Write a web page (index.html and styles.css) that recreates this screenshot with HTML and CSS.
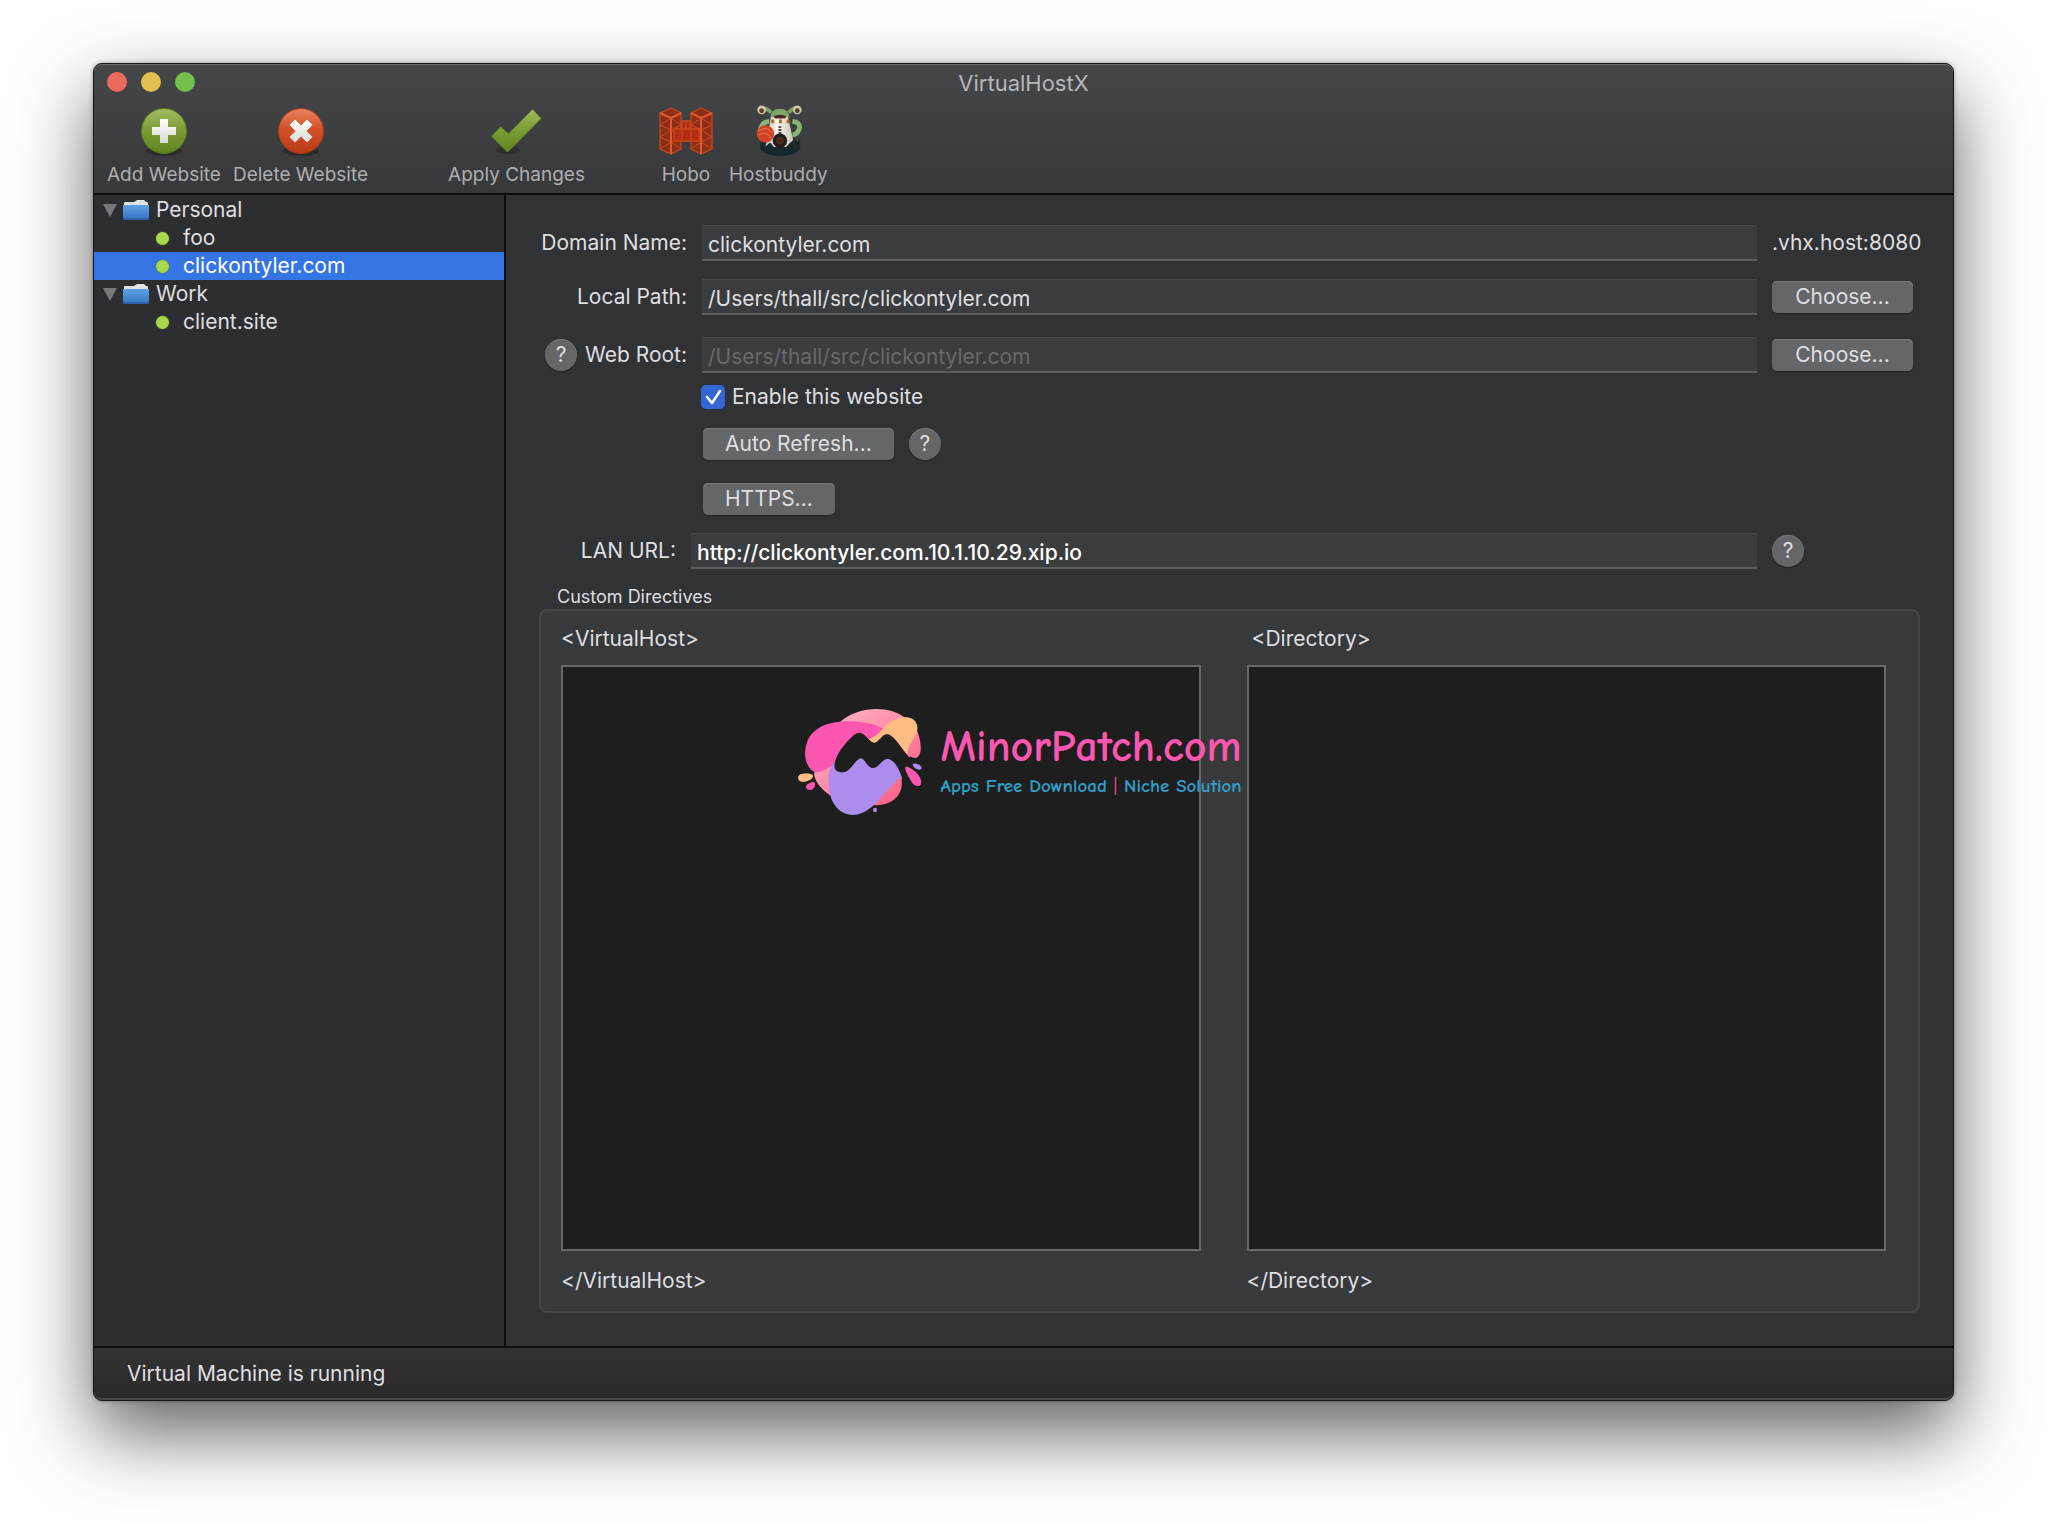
FILE: index.html
```html
<!DOCTYPE html>
<html lang="en">
<head>
<meta charset="utf-8">
<title>VirtualHostX</title>
<link rel="stylesheet" href="styles.css">
</head>
<body>
<svg class="defs" width="0" height="0" aria-hidden="true">
  <defs>
    <linearGradient id="green" x1="0" y1="0" x2="0" y2="1"><stop offset="0" stop-color="#a3bd62"/><stop offset=".45" stop-color="#7d9f35"/><stop offset="1" stop-color="#5f8320"/></linearGradient>
    <linearGradient id="red" x1="0" y1="0" x2="0" y2="1"><stop offset="0" stop-color="#e88562"/><stop offset=".45" stop-color="#d4502a"/><stop offset="1" stop-color="#b63a15"/></linearGradient>
    <linearGradient id="white" x1="0" y1="0" x2="0" y2="1"><stop offset="0" stop-color="#fff"/><stop offset="1" stop-color="#d9dbd6"/></linearGradient>
    <linearGradient id="folder" x1="0" y1="0" x2="0" y2="1"><stop offset="0" stop-color="#5ea2e2"/><stop offset="1" stop-color="#3474c2"/></linearGradient>
    <linearGradient id="robe" x1="0" y1="0" x2="1" y2="0"><stop offset="0" stop-color="#b9b5a6"/><stop offset=".4" stop-color="#fbf9ee"/><stop offset="1" stop-color="#c7c0ad"/></linearGradient>
    <linearGradient id="rose" x1="0" y1="0" x2="1" y2="1"><stop offset="0" stop-color="#ffb9c4"/><stop offset=".3" stop-color="#ff9fb4"/><stop offset="1" stop-color="#f8567f"/></linearGradient>
    <symbol id="folder-icon" viewBox="0 0 26 22">
      <path d="M1 5V4q0-1 1-1h9l3-2h7l2 2h1q1 0 1 1v3H1z" fill="#dfe3e6"/>
      <path d="M0 6h26v13q0 2-1 2H1q-1 0-1-2z" fill="url(#folder)"/>
      <path d="M0 20h26" stroke="#244f91"/>
    </symbol>
  </defs>
</svg>
<div class="window">
  <header class="chrome">
    <div class="titlebar">
      <div class="lights">
        <button class="light close" aria-label="Close"></button>
        <button class="light minimize" aria-label="Minimize"></button>
        <button class="light zoom" aria-label="Zoom"></button>
      </div>
      <h1>VirtualHostX</h1>
    </div>
    <div class="toolbar">
      <button class="tool">
        <svg width="54" height="50" viewBox="0 0 54 50"><ellipse cx="27" cy="44" rx="18" ry="5" fill="#222" opacity=".6"/><circle cx="27" cy="24" r="22.500" fill="url(#green)" stroke="#587a20"/><path d="M23 12h8v8h8v8h-8v8h-8v-8h-8v-8h8z" fill="url(#white)"/></svg>
        <span>Add Website</span>
      </button>
      <button class="tool">
        <svg width="54" height="50" viewBox="0 0 54 50"><ellipse cx="27" cy="44" rx="18" ry="5" fill="#222" opacity=".6"/><circle cx="27" cy="24" r="22.500" fill="url(#red)" stroke="#ae3a1a"/><path d="M21 12.500l6 6 6-6 5.500 5.500-6 6 6 6-5.500 5.500-6-6-6 6-5.500-5.500 6-6-6-6z" fill="url(#white)"/></svg>
        <span>Delete Website</span>
      </button>
      <button class="tool apply">
        <svg width="54" height="50" viewBox="0 0 54 50"><ellipse cx="19" cy="43" rx="12" ry="4" fill="#222" opacity=".5"/><path d="M3 29.500l8.500-9.500 8 7L43.500 2.500 52 11.500 18.500 45z" fill="url(#green)" stroke="#688c2b"/></svg>
        <span>Apply Changes</span>
      </button>
      <button class="tool hobo">
        <svg width="54" height="50" viewBox="0 0 54 50">
          <g stroke="#c9471f" stroke-width="1.300" stroke-linejoin="round">
            <path d="M20 16h15v17H20z" fill="#a8260e"/>
            <path d="M1 6l11-5 10 5v36l-10 5-11-5z" fill="#8d2f17"/>
            <path d="M32 6l10-5 11 5v36l-11 5-10-5z" fill="#8d2f17"/>
            <path d="M1 18l11 5 10-5M1 30l11 5 10-5M32 18l10 5 11-5M32 30l10 5 11-5" fill="none"/>
            <path d="M12 11L1 18M12 23L1 30M12 35L1 42M12 11l10 7M12 23l10 7M12 35l10 7M42 11l-10 7M42 23l-10 7M42 35l-10 7M42 11l11 7M42 23l11 7M42 35l11 7" fill="none" stroke-width="1"/>
            <path d="M1 6l11 5 10-5M12 11v36M32 6l10 5 11-5M42 11v36" fill="none" stroke="#e0582e" stroke-width="2"/>
            <path d="M15 22h25v12H15zM23 22v12M32 22v12M23 14h8v8h-8zM27 14v8" fill="#b32d12"/>
          </g>
        </svg>
        <span>Hobo</span>
      </button>
      <button class="tool buddy">
        <svg width="54" height="52" viewBox="0 0 54 54">
          <ellipse cx="29" cy="43" rx="21" ry="10" fill="#15282b"/>
          <path d="M20 8Q12 0 9 6M38 8Q45 0 48 6" fill="none" stroke="#79a269" stroke-width="4"/>
          <path d="M18 17Q10 17 8 28M42 17q9 1 7 8-2 6-7 6" fill="none" stroke="#89b676" stroke-width="5"/>
          <path d="M20 11q8-7 17 0l7 31-4-3-5 5-5-3-7 3-4-5-5 4z" fill="url(#robe)"/>
          <path d="M44 35l3 5 3-6v12h-9l-2-6z" fill="#1b292b"/>
          <path d="M19 13q1-9 10-9t10 9q-10-4-20 0z" fill="#7ca56a"/>
          <path d="M22 12q7-4 14 0l-2 2H24z" fill="#4b271f"/>
          <circle cx="10" cy="5" r="4.500" fill="#d4c9ab"/><circle cx="10" cy="6" r="2.500" fill="#6b3429"/>
          <circle cx="47" cy="5" r="4.500" fill="#d4c9ab"/><circle cx="47" cy="6" r="2.500" fill="#563b35"/>
          <circle cx="14" cy="30" r="9" fill="#cf4428"/><path d="M7 27q8-6 14 2M7 31q8-5 13 4" fill="none" stroke="#ec7752"/>
          <path d="M29 22v10" stroke="#434645" stroke-width="3" stroke-dasharray="2 1"/>
          <path d="M20 17h3M28 17h3M36 17h3" stroke="#ac6829" stroke-width="4"/>
          <circle cx="29" cy="37" r="7.500" fill="#251e1b"/><circle cx="29" cy="37" r="4" fill="#4a2b22"/>
        </svg>
        <span>Hostbuddy</span>
      </button>
    </div>
  </header>
  <div class="body">
    <nav class="sidebar" aria-label="Websites">
      <ul class="tree">
        <li>
          <div class="group"><i class="arrow"></i><svg width="26" height="22"><use href="#folder-icon"/></svg><span>Personal</span></div>
          <ul>
            <li><a class="site" href="#foo"><i class="dot"></i>foo</a></li>
            <li><a class="site selected" href="#clickontyler" aria-current="page"><i class="dot"></i>clickontyler.com</a></li>
          </ul>
        </li>
        <li>
          <div class="group"><i class="arrow"></i><svg width="26" height="22"><use href="#folder-icon"/></svg><span>Work</span></div>
          <ul>
            <li><a class="site" href="#client"><i class="dot"></i>client.site</a></li>
          </ul>
        </li>
      </ul>
    </nav>
    <main class="content">
      <div class="row">
        <label class="name" for="domain">Domain Name:</label>
        <input class="field" id="domain" type="text" value="clickontyler.com">
        <span class="after suffix">.vhx.host:8080</span>
      </div>
      <div class="row">
        <label class="name" for="path">Local Path:</label>
        <input class="field" id="path" type="text" value="/Users/thall/src/clickontyler.com">
        <div class="after"><button class="push choose">Choose...</button></div>
      </div>
      <div class="row root">
        <div class="name"><button class="help" aria-label="Web root help">?</button><label for="root">Web Root:</label></div>
        <input class="field" id="root" type="text" placeholder="/Users/thall/src/clickontyler.com">
        <div class="after"><button class="push choose">Choose...</button></div>
      </div>
      <div class="options">
        <label class="enable"><input class="check" type="checkbox" checked>Enable this website</label>
        <div class="line"><button class="push">Auto Refresh...</button><button class="help" aria-label="Auto refresh help">?</button></div>
        <div class="line"><button class="push">HTTPS...</button></div>
      </div>
      <div class="row lan">
        <label class="name" for="lan">LAN URL:</label>
        <input class="field" id="lan" type="text" value="http://clickontyler.com.10.1.10.29.xip.io">
        <div class="after"><button class="help" aria-label="LAN URL help">?</button></div>
      </div>
      <h2>Custom Directives</h2>
      <section class="directives">
        <div class="directive">
          <label for="vhost">&lt;VirtualHost&gt;</label>
          <textarea id="vhost"></textarea>
          <span>&lt;/VirtualHost&gt;</span>
        </div>
        <div class="directive">
          <label class="indent" for="directory">&lt;Directory&gt;</label>
          <textarea id="directory"></textarea>
          <span>&lt;/Directory&gt;</span>
        </div>
      </section>
    </main>
  </div>
  <footer class="status">Virtual Machine is running</footer>
  <div class="brand">
    <svg width="126" height="110" viewBox="51 50 378 330" aria-hidden="true">
      <path d="M180 95C235 45 330 45 375 82c45 20 52 90 45 107-6 18-18 16-30 9-10 40-24 50-25 72 5 48-32 76-85 75-60 2-105-20-130-30-25-18-45-40-48-65z" fill="url(#rose)"/>
      <path d="M104 246C75 230 70 190 80 160c14-50 70-68 130-67 45 1 80 9 105 26-12 15-30 25-50 28l-20 70-90 10c-20 10-30 20-51 19z" fill="#fb57b0"/>
      <path d="M265 148c45-18 50-60 105-67 38-4 48 26 40 48-12 24-28 38-27 66l-60 5-62-30z" fill="#ffbd84"/>
      <path d="M146 270c-2-25 6-40 17-54l80-25h84c18 12 40 45 40 68-20 10-50 48-88 87-38 35-80 35-105 10-22-22-28-50-28-86z" fill="#ac8cec"/>
      <path d="M164 234c-6-27 24-70 55-98 12-10 22-12 31-4 18 15 25 29 38 24 12-6 20-28 37-24 22 9 39 42 62 68l25 10-15 90-30-35c-8-25-23-58-45-60-18 2-25 29-44 28-18-2-22-28-36-29-18 5-30 41-53 42-12 1-22-3-25-12z" fill="#1e1e1e"/>
      <path d="M54 262c2-14 20-13 35-12 16 2 10 13 2 18-14 8-35 11-37-6z" fill="#ffbd84"/>
      <path d="M78 289c3-10 13-12 22-15 9 3 5 20-4 24-10 2-19-2-18-9z" fill="#fb57b0"/>
      <path d="M376 233c1-8 13-2 22 5 16 9 31 31 24 45-5 7-18 5-25-5-8-14-21-32-21-45z" fill="#fb57b0"/>
      <path d="M398 222c6-7 28 2 27 12-3 9-26 2-27-12z" fill="#ac8cec"/>
      <ellipse cx="285" cy="359" rx="6" ry="7" fill="#ac8cec"/>
    </svg>
    <div class="brand-text">
      <strong>MinorPatch.com</strong>
      <span>Apps Free Download <b>|</b> Niche Solution</span>
    </div>
  </div>
</div>
</body>
</html>
```
FILE: styles.css
```css
* { box-sizing: border-box; }

body {
  display: flex;
  min-height: 100vh;
  margin: 0;
  padding: 63px 93px 122px;
  background: #fff;
  color: #dfdfe0;
  font: 21px/28px Inter, "Liberation Sans", sans-serif;
}

button, input, textarea { font: inherit; color: inherit; margin: 0; }
button { padding: 0; border: 0; background: none; }
h1, h2, ul { margin: 0; padding: 0; font-weight: 400; list-style: none; }
svg { display: block; flex: none; }
.defs { position: absolute; }

.window {
  position: relative;
  display: flex;
  flex: 1;
  flex-direction: column;
  min-width: 0;
  border: 1px solid #151515;
  border-radius: 9px;
  background: #313234;
  box-shadow: 0 0 4px rgba(0, 0, 0, .3), 0 32px 76px rgba(0, 0, 0, .62);
}

.chrome {
  border-top: 1px solid #6b6c6e;
  border-bottom: 2px solid #0d0d0d;
  border-radius: 8px 8px 0 0;
  background: linear-gradient(#454648, #37383a);
}
.titlebar { position: relative; padding-top: 4px; }
.titlebar h1 { color: #b6b6b7; font-size: 22px; line-height: 28px; text-align: center; }
.lights { position: absolute; left: 13px; top: 7px; display: flex; gap: 14px; }
.light { width: 20px; height: 20px; border-radius: 50%; }
.close { background: #ec695d; }
.minimize { background: #e0c04f; }
.zoom { background: #73c04b; }

.toolbar { display: flex; align-items: flex-end; gap: 12px; padding: 8px 13px 4px; }
.tool {
  display: flex;
  flex-direction: column;
  align-items: center;
  gap: 4px;
  color: #adaeaf;
  font-size: 19px;
  line-height: 28px;
}
.apply { margin-left: 68px; }
.hobo { margin: 0 4px 0 62px; }

.body { display: flex; flex: 1; }
.sidebar { flex: none; width: 412px; padding-top: 1px; border-right: 2px solid #0b0b0b; background: #2d2e30; }
.group { display: flex; align-items: center; height: 28px; padding-left: 9px; }
.group span { margin-left: 7px; }
.arrow { margin-right: 6px; border: 7px solid transparent; border-top: 13px solid #77787a; border-bottom: 0; }
.site { display: flex; align-items: center; gap: 14px; height: 28px; padding-left: 62px; color: inherit; text-decoration: none; }
.selected { background: #3574e3; color: #fff; }
.dot { width: 13px; height: 13px; border-radius: 50%; background: #a8d94c; box-shadow: 0 0 2px #587a24; }

.content { display: flex; flex: 1; flex-direction: column; min-width: 0; padding: 30px 33px 33px; }
.row { display: flex; align-items: center; margin-bottom: 18px; }
.name { display: flex; flex: none; align-items: center; justify-content: flex-end; gap: 8px; width: 148px; margin-right: 15px; }
.field {
  flex: 1;
  min-width: 0;
  height: 36px;
  padding: 4px 6px 0;
  border: 0;
  border-top: 1px solid #454648;
  border-bottom: 2px solid #5b5c5e;
  border-radius: 0;
  background: #3b3c3e;
  outline: 0;
}
.field::placeholder { color: #68696b; opacity: 1; }
.after { flex: none; width: 148px; margin-left: 15px; }
.suffix { white-space: nowrap; }
.root { margin: 4px 0 12px; }
.push {
  height: 32px;
  padding: 0 22px;
  border-radius: 5px;
  background: #656668;
  box-shadow: inset 0 1px #777879, 0 1px 1px #222;
  line-height: 32px;
  display: block;
}
.choose { width: 141px; }
.help {
  flex: none;
  width: 32px;
  height: 32px;
  border-radius: 50%;
  background: #656668;
  box-shadow: inset 0 1px #777879, 0 1px 1px #222;
  line-height: 32px;
  text-align: center;
}
.options { padding-left: 164px; }
.enable { display: flex; align-items: center; gap: 7px; height: 24px; margin-left: -2px; }
.check {
  appearance: none;
  width: 24px;
  height: 24px;
  border-radius: 5px;
  background: #3567d3 url("data:image/svg+xml,%3Csvg xmlns='http://www.w3.org/2000/svg' viewBox='0 0 24 24'%3E%3Cpath d='M6 12l5 6 8-12' fill='none' stroke='white' stroke-width='2.500' stroke-linecap='round' stroke-linejoin='round'/%3E%3C/svg%3E");
  box-shadow: 0 0 2px #193267;
}
.line { display: flex; gap: 15px; margin: 19px 0 23px; }
.lan { margin: -5px 0 16px; }
.lan .name { width: 137px; }
.lan .field { color: #fff; font-weight: 500; }
h2 { padding-left: 18px; font-size: 18px; line-height: 24px; }

.directives {
  display: grid;
  flex: 1;
  grid-template-columns: 1fr 1fr;
  gap: 46px;
  padding: 14px 32px 16px 20px;
  border: 2px solid #454648;
  border-radius: 8px;
  background: #38393b;
}
.directive { display: flex; flex-direction: column; }
.directive textarea {
  flex: 1;
  width: 100%;
  margin: 12px 0 16px;
  padding: 8px;
  border: 2px solid #68696a;
  border-radius: 0;
  background: #1e1e1e;
  outline: 0;
  resize: none;
}
.indent { padding-left: 5px; }

.status {
  padding: 12px 33px 10px;
  border-top: 2px solid #111;
  border-bottom: 2px solid #484848;
  border-radius: 0 0 8px 8px;
  background: linear-gradient(#333, #2a2a2a);
}

.brand { position: absolute; top: 643px; left: 50%; display: flex; gap: 18px; width: 452px; margin-left: -227px; pointer-events: none; }
.brand-text { padding-top: 14px; white-space: nowrap; }
.brand strong, .brand span { display: block; font-family: "Comic Sans MS", "Comic Neue", Lato, sans-serif; font-weight: 700; }
.brand strong { color: #fb57b0; font-size: 44px; line-height: 52px; }
.brand span { color: #309fc9; font-size: 19px; line-height: 26px; }
.brand b { color: #e94e90; font-weight: 400; }
```
